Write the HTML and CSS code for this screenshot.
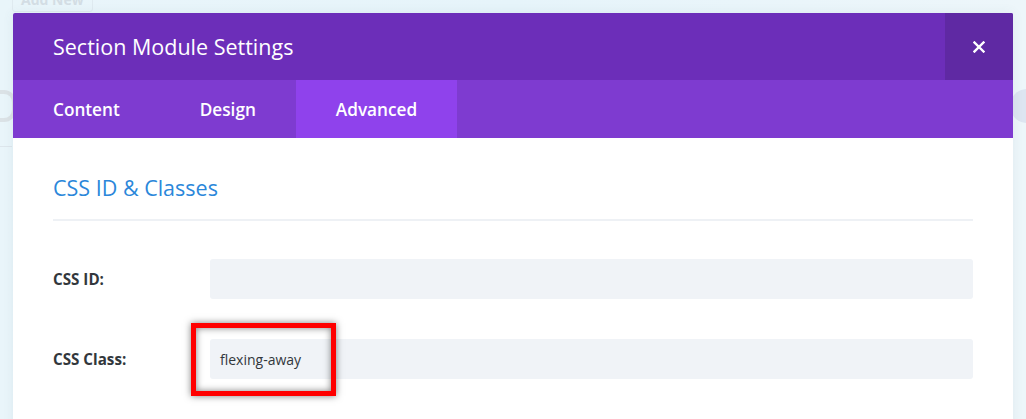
FILE: index.html
```html
<!DOCTYPE html>
<html>
<head>
<meta charset="utf-8">
<link rel="stylesheet" href="styles.css">
</head>
<body>
<div class="builder">
  <div class="topbar">
    <span class="ghost-btn">Add New</span>
  </div>
  <div class="ghost-row">
    <span class="ghost-big"></span>
    <span class="ghost-circle"></span>
  </div>
  <div class="ghost-row2">
    <span class="ghost-bar"></span>
    <span class="ghost-bar right"></span>
  </div>
</div>

<div class="modal">
  <div class="modal-header">
    <h1 class="modal-title">Section Module Settings</h1>
    <button class="modal-close" aria-label="Close">
      <svg width="12" height="12" viewBox="0 0 12 12"><path d="M1.5 1.5 L10.5 10.5 M10.5 1.5 L1.5 10.5" stroke="#fff" stroke-width="2.4" stroke-linecap="square"/></svg>
    </button>
  </div>
  <div class="tabs">
    <div class="tab">Content</div>
    <div class="tab">Design</div>
    <div class="tab active">Advanced</div>
  </div>
  <div class="modal-body">
    <h2 class="section-title">CSS ID &amp; Classes</h2>
    <div class="field">
      <label class="field-label">CSS ID:</label>
      <div class="input"></div>
    </div>
    <div class="field">
      <label class="field-label">CSS Class:</label>
      <div class="input"><span class="input-text">flexing-away</span></div>
      <div class="highlight"></div>
    </div>
  </div>
</div>
</body>
</html>
```

FILE: styles.css
```css
html, body {
  margin: 0;
  padding: 0;
}
body {
  width: 1026px;
  height: 419px;
  overflow: hidden;
  position: relative;
  background: linear-gradient(90deg, #e9f5fa 0%, #e6f4fa 50%, #edf6fa 100%);
  font-family: "Open Sans", "Liberation Sans", sans-serif;
}
.builder {
  height: 419px;
  position: relative;
}
.topbar {
  height: 20px;
  padding-left: 12px;
}
.ghost-btn {
  display: inline-block;
  padding: 0 8px;
  height: 22px;
  line-height: 22px;
  border: 1px solid #dfeaf0;
  border-radius: 3px;
  color: #d3dde4;
  font-weight: 700;
  font-size: 14px;
  position: relative;
  top: -12px;
}
.ghost-row {
  display: flex;
  justify-content: space-between;
  align-items: center;
  margin-top: 66px;
  height: 40px;
}
.ghost-big {
  width: 12px;
  height: 24px;
  border: 4px solid #dbe2e6;
  border-left: 0;
  border-radius: 0 12px 12px 0;
}
.ghost-circle {
  width: 34px;
  height: 34px;
  border-radius: 50%;
  background: #dde5f1;
  margin-right: -18px;
}
.ghost-row2 {
  display: flex;
  justify-content: space-between;
  margin-top: 8px;
}
.ghost-bar {
  width: 12px;
  height: 12px;
  border-bottom: 1px solid #dde6ec;
}
.ghost-bar.right {
  border-bottom: 0;
}

.modal {
  position: absolute;
  left: 13px;
  top: 13px;
  width: 1000px;
  height: 420px;
  background: #fff;
  border-radius: 2px 2px 0 0;
  box-shadow: 0 0 12px rgba(80, 100, 120, 0.08);
  overflow: hidden;
}
.modal-header {
  display: flex;
  height: 67px;
  background: #6c2eb9;
}
.modal-title {
  flex: 1;
  margin: 0;
  padding-left: 40px;
  line-height: 67px;
  font-size: 21.5px;
  font-weight: 400;
  color: #fff;
}
.modal-close {
  width: 68px;
  height: 67px;
  border: 0;
  padding: 0;
  background: #5f29a3;
  display: flex;
  align-items: center;
  justify-content: center;
  cursor: pointer;
}
.tabs {
  display: flex;
  height: 58px;
  background: #7e3bd0;
}
.tab {
  padding: 0 40px;
  line-height: 60px;
  font-size: 17.2px;
  font-weight: 600;
  color: #fff;
}
.tab.active {
  background: #8f42ec;
}
.modal-body {
  padding: 0 40px;
}
.section-title {
  margin: 0;
  padding-top: 35px;
  padding-bottom: 16px;
  font-size: 21.5px;
  font-weight: 400;
  line-height: 30px;
  color: #2b87da;
  border-bottom: 2px solid #eef1f5;
}
.field {
  display: flex;
  align-items: center;
  position: relative;
  height: 40px;
  margin-top: 38px;
}
.field + .field {
  margin-top: 40px;
}
.field-label {
  width: 157px;
  font-size: 15.2px;
  font-weight: 700;
  color: #32373c;
}
.input {
  flex: 1;
  height: 40px;
  background: #f0f3f7;
  border-radius: 3px;
  display: flex;
  align-items: center;
}
.input-text {
  padding-left: 10px;
  font-size: 14px;
  color: #32373c;
}
.highlight {
  position: absolute;
  left: 138px;
  top: -16px;
  width: 135px;
  height: 63px;
  border: 5px solid #ff0000;
  box-shadow: 0 0 7px rgba(0, 0, 0, 0.5), inset 0 0 7px rgba(0, 0, 0, 0.5);
}
```
